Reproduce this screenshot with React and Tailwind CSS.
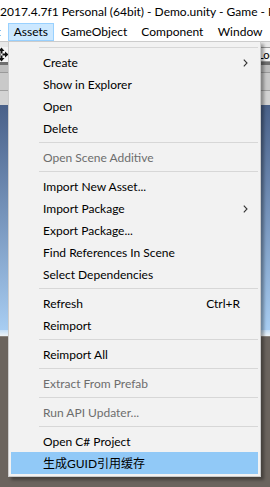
import React from "react";

const FONT = "font-['Lato','Noto_Sans_CJK_SC',sans-serif]";

function Item({ label, disabled, arrow, shortcut, active }) {
  return (
    <div
      className={`relative flex items-center h-[22px] pl-[32px] pt-[1px] text-[12px] leading-none whitespace-nowrap ${
        active ? "bg-[#91c9f7]" : ""
      } ${disabled ? "text-[#6d6d6d]" : "text-black"}`}
    >
      <span>{label}</span>
      {shortcut && (
        <span className="ml-auto mr-[18px] text-black">{shortcut}</span>
      )}
      {arrow && (
        <svg
          className="ml-auto mr-[10px]"
          width="5"
          height="8"
          viewBox="0 0 5 8"
        >
          <path d="M0.8 0.6 L4 4 L0.8 7.4" fill="none" stroke="#333" strokeWidth="1.1" />
        </svg>
      )}
    </div>
  );
}

function Sep() {
  return (
    <div className="h-[7px] flex items-center pl-[28px]">
      <div className="h-px w-full bg-[#d7d7d7]" />
    </div>
  );
}

function MoveIcon() {
  return (
    <svg width="15" height="15" viewBox="0 0 15 15" className="ml-[-6px]">
      <rect x="0" y="0" width="15" height="15" fill="#f4f4f4" />
      <g fill="#111">
        <polygon points="7.5,0.5 10.5,4 8.5,4 8.5,6.5 6.5,6.5 6.5,4 4.5,4" />
        <polygon points="7.5,14.5 10.5,11 8.5,11 8.5,8.5 6.5,8.5 6.5,11 4.5,11" />
        <polygon points="0.5,7.5 4,4.5 4,6.5 6.5,6.5 6.5,8.5 4,8.5 4,10.5" />
        <polygon points="14.5,7.5 11,4.5 11,6.5 8.5,6.5 8.5,8.5 11,8.5 11,10.5" />
      </g>
    </svg>
  );
}

export default function App() {
  return (
    <div
      className={`relative w-[270px] h-[487px] overflow-hidden bg-[#6b645e] ${FONT}`}
    >
      {/* title bar */}
      <div className="h-[22px] bg-white flex items-center text-[12px] text-black whitespace-nowrap overflow-hidden pt-[2px]">
        2017.4.7f1 Personal (64bit) - Demo.unity - Game - PC
      </div>
      {/* menu bar */}
      <div className="h-[19px] bg-white flex items-stretch text-[12px] text-black whitespace-nowrap">
        <div className="w-[8px] flex items-center overflow-hidden pt-[1px]">
          <span className="ml-[-20px]">Edit</span>
        </div>
        <div className="w-[46px] mt-[1px] flex items-center justify-center bg-[#cce8ff] border border-[#99d1ff]">
          Assets
        </div>
        <div className="w-[81px] flex items-center justify-center pt-[1px]">
          GameObject
        </div>
        <div className="w-[76px] flex items-center justify-center pt-[1px]">
          Component
        </div>
        <div className="w-[60px] flex items-center justify-center pt-[1px]">
          Window
        </div>
      </div>
      {/* unity toolbar */}
      <div className="h-[6px] bg-[#e8e8e8] border-t border-[#c8c8c8]" />
      <div className="h-[15px] bg-[#d9d9d9] flex items-center justify-between">
        <MoveIcon />
        <div className="h-[15px] w-[26px] mr-[-12px] bg-[#f4f4f4] border border-[#9a9a9a] text-[11px] leading-[13px] pl-[1px] text-black overflow-hidden">
          Local
        </div>
      </div>
      <div className="h-[3px] bg-[#6e6e6e]" />
      <div className="h-[7px] bg-[#bdbdbd]" />
      <div className="h-px bg-[#9a9a9a]" />
      <div className="h-[17px] bg-[#c9c9c9]" />
      <div className="h-px bg-[#a0a0a0]" />
      <div className="h-[14px] bg-[#d3d3d3]" />
      {/* scene sky */}
      <div className="h-[225px] bg-gradient-to-b from-[#4a6189] to-[#a8cdf2]" />
      <div className="h-[6px] bg-gradient-to-b from-[#c4def6] to-[#eef4f8]" />
      <div className="h-[1px] bg-[#8a847e]" />

      {/* dropdown menu */}
      <div className="absolute left-[8px] top-[41px] w-[253px] bg-[#f2f2f2] border border-[#cccccc] p-[2px] shadow-[3px_3px_3px_rgba(0,0,0,0.35)]">
        <Sep />
        <Item label="Create" arrow />
        <Item label="Show in Explorer" />
        <Item label="Open" />
        <Item label="Delete" />
        <Sep />
        <Item label="Open Scene Additive" disabled />
        <Sep />
        <Item label="Import New Asset..." />
        <Item label="Import Package" arrow />
        <Item label="Export Package..." />
        <Item label="Find References In Scene" />
        <Item label="Select Dependencies" />
        <Sep />
        <Item label="Refresh" shortcut="Ctrl+R" />
        <Item label="Reimport" />
        <Sep />
        <Item label="Reimport All" />
        <Sep />
        <Item label="Extract From Prefab" disabled />
        <Sep />
        <Item label="Run API Updater..." disabled />
        <Sep />
        <Item label="Open C# Project" />
        <Item label="生成GUID引用缓存" active />
      </div>
    </div>
  );
}
